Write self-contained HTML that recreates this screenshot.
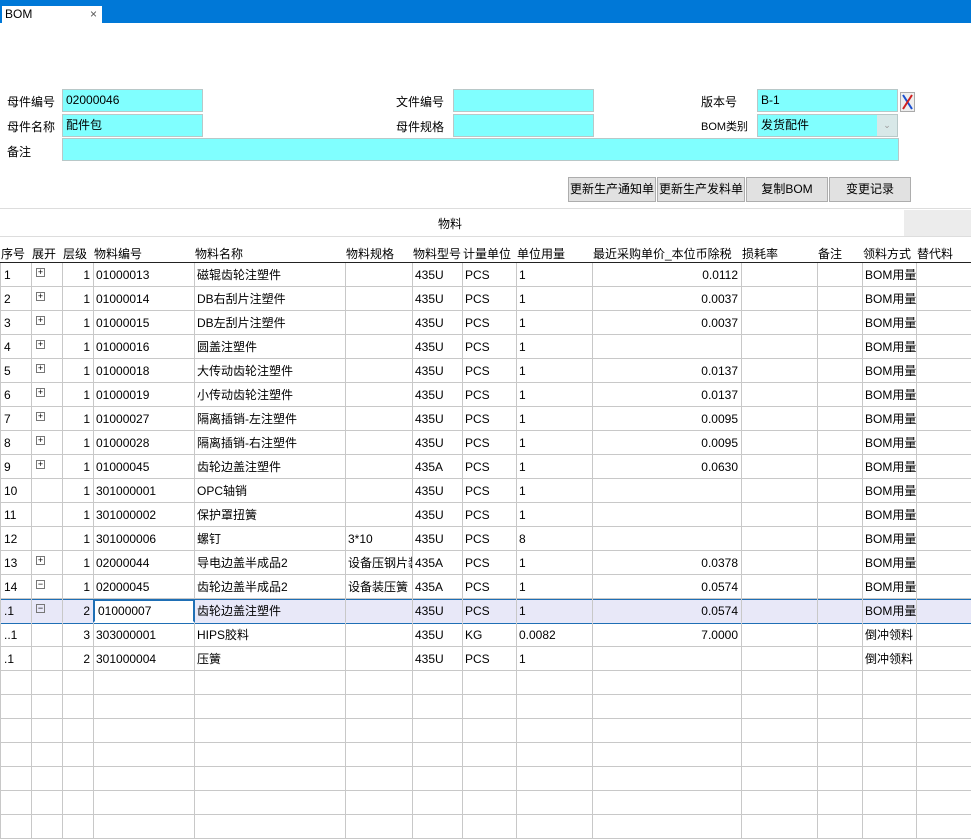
<!DOCTYPE html>
<html><head><meta charset="utf-8"><style>
*{margin:0;padding:0;box-sizing:border-box}
body{width:971px;height:836px;overflow:hidden;background:#fff;font-family:"Liberation Sans","Noto Sans CJK SC",sans-serif;font-size:12px;color:#000;position:relative}
.a{position:absolute;white-space:nowrap}
.in{position:absolute;background:#80ffff;border:1px solid #b8c8c8;height:23px;line-height:21px;padding-left:3px}
.btn{position:absolute;top:177px;height:25px;background:#e1e1e1;border:1px solid #adadad;text-align:center;line-height:23px}
.c{position:absolute;height:24px;line-height:25px;border-right:1px solid #c8c8c8;border-bottom:1px solid #c8c8c8;padding:0 3px;overflow:hidden;white-space:nowrap}
.r{text-align:right}
.h{position:absolute;top:245px;height:18px;line-height:18px;white-space:nowrap}
.pm{display:inline-block;width:9px;height:9px;border:1px solid #777;position:absolute;left:5px;top:5px;font-size:9px;line-height:7px;text-align:center}
</style></head><body>
<div class="a" style="left:0;top:0;width:971px;height:23px;background:#0078d7"></div>
<div class="a" style="left:2px;top:6px;width:100px;height:17px;background:#fff;line-height:17px;padding-left:3px">BOM<span style="position:absolute;left:88px;color:#555">×</span></div>

<div class="a" style="left:7px;top:93px">母件编号</div>
<div class="in" style="left:62px;top:89px;width:141px">02000046</div>
<div class="a" style="left:7px;top:118px">母件名称</div>
<div class="in" style="left:62px;top:114px;width:141px">配件包</div>
<div class="a" style="left:7px;top:143px">备注</div>
<div class="in" style="left:62px;top:138px;width:837px"></div>
<div class="a" style="left:396px;top:93px">文件编号</div>
<div class="in" style="left:453px;top:89px;width:141px"></div>
<div class="a" style="left:396px;top:118px">母件规格</div>
<div class="in" style="left:453px;top:114px;width:141px"></div>
<div class="a" style="left:701px;top:93px">版本号</div>
<div class="in" style="left:757px;top:89px;width:141px">B-1</div>
<div class="a" style="left:701px;top:118px;font-size:11px">BOM类别</div>
<div class="in" style="left:757px;top:114px;width:141px">发货配件<span style="position:absolute;right:0;top:0;width:20px;height:21px;background:#d8e8e8;color:#999;text-align:center;font-size:9px">⌄</span></div>
<svg class="a" style="left:900px;top:92px" width="15" height="20"><rect x="0.5" y="0.5" width="14" height="19" fill="#eee" stroke="#aaa"/><path d="M3 3L12 17" stroke="#1a4fd0" stroke-width="2"/><path d="M12 3L3 17" stroke="#d02020" stroke-width="2"/></svg>

<div class="btn" style="left:568px;width:88px">更新生产通知单</div>
<div class="btn" style="left:657px;width:88px">更新生产发料单</div>
<div class="btn" style="left:746px;width:82px">复制BOM</div>
<div class="btn" style="left:829px;width:82px">变更记录</div>

<div class="a" style="left:0;top:208px;width:971px;height:29px;border-top:1px solid #ddd;border-bottom:1px solid #ddd"></div>
<div class="a" style="left:438px;top:215px">物料</div>
<div class="a" style="left:904px;top:210px;width:67px;height:26px;background:#ececec"></div>

<div class="h" style="left:1px">序号</div>
<div class="h" style="left:32px">展开</div>
<div class="h" style="left:63px">层级</div>
<div class="h" style="left:94px">物料编号</div>
<div class="h" style="left:195px">物料名称</div>
<div class="h" style="left:346px">物料规格</div>
<div class="h" style="left:413px">物料型号</div>
<div class="h" style="left:463px">计量单位</div>
<div class="h" style="left:517px">单位用量</div>
<div class="h" style="left:593px">最近采购单价_本位币除税</div>
<div class="h" style="left:742px">损耗率</div>
<div class="h" style="left:818px">备注</div>
<div class="h" style="left:863px">领料方式</div>
<div class="h" style="left:917px">替代料</div>
<div class="a" style="left:0;top:262px;width:971px;height:1px;background:#222"></div>

<div id="g"></div>
<script>
var X=[0,31,62,93,194,345,412,462,516,592,741,817,862,916,971];
var D=[
["1","+","1","01000013","磁辊齿轮注塑件","","435U","PCS","1","0.0112","","","BOM用量"],
["2","+","1","01000014","DB右刮片注塑件","","435U","PCS","1","0.0037","","","BOM用量"],
["3","+","1","01000015","DB左刮片注塑件","","435U","PCS","1","0.0037","","","BOM用量"],
["4","+","1","01000016","圆盖注塑件","","435U","PCS","1","","","","BOM用量"],
["5","+","1","01000018","大传动齿轮注塑件","","435U","PCS","1","0.0137","","","BOM用量"],
["6","+","1","01000019","小传动齿轮注塑件","","435U","PCS","1","0.0137","","","BOM用量"],
["7","+","1","01000027","隔离插销-左注塑件","","435U","PCS","1","0.0095","","","BOM用量"],
["8","+","1","01000028","隔离插销-右注塑件","","435U","PCS","1","0.0095","","","BOM用量"],
["9","+","1","01000045","齿轮边盖注塑件","","435A","PCS","1","0.0630","","","BOM用量"],
["10","","1","301000001","OPC轴销","","435U","PCS","1","","","","BOM用量"],
["11","","1","301000002","保护罩扭簧","","435U","PCS","1","","","","BOM用量"],
["12","","1","301000006","螺钉","3*10","435U","PCS","8","","","","BOM用量"],
["13","+","1","02000044","导电边盖半成品2","设备压钢片装","435A","PCS","1","0.0378","","","BOM用量"],
["14","-","1","02000045","齿轮边盖半成品2","设备装压簧","435A","PCS","1","0.0574","","","BOM用量"],
[".1","-","2","01000007","齿轮边盖注塑件","","435U","PCS","1","0.0574","","","BOM用量"],
["..1","","3","303000001","HIPS胶料","","435U","KG","0.0082","7.0000","","","倒冲领料"],
[".1","","2","301000004","压簧","","435U","PCS","1","","","","倒冲领料"]];
var h="";
for(var i=0;i<24;i++){var y=264+24*i,d=D[i]||[];
 if(i==14)h+='<div class="a" style="left:0;top:'+(y-1)+'px;width:971px;height:25px;background:#e8e8f8;border-top:1px solid #1f6fb5;border-bottom:1px solid #1f6fb5"></div>';
 for(var j=0;j<14;j++){var t=d[j]||"",cls="c"+((j==2||j==9)?" r":"");var st='left:'+X[j]+'px;top:'+(y-1)+'px;width:'+(X[j+1]-X[j]+1)+'px;border-left:'+(j==0?'1px solid #c8c8c8':'0')+';';
  var inner=t;
  if(j==1&&t)inner='<span class="pm">'+(t=="+"?"+":"−")+'</span>';
  if(i==14&&j==3)st+='background:#fff;border:2px solid #1f6fb5;line-height:21px;';
  if(i==14)st+='border-bottom-color:transparent;';
  h+='<div class="'+cls+'" style="'+st+'">'+inner+'</div>';}
}
document.getElementById("g").innerHTML=h;
</script>
</body></html>
